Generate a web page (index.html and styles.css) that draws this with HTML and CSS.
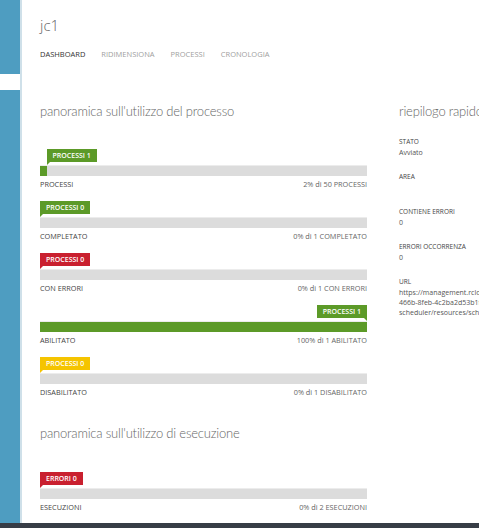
FILE: index.html
```html
<!DOCTYPE html>
<html lang="it">
<head>
<meta charset="utf-8">
<title>jc1 - dashboard</title>
<link rel="stylesheet" href="styles.css">
</head>
<body>
<div class="app">
  <aside class="sidebar">
    <div class="side-top"></div>
    <div class="side-strip"></div>
    <div class="side-rest"></div>
  </aside>
  <main class="main">
    <header class="head">
      <h1 class="title">jc1</h1>
      <nav class="tabs">
        <span class="tab tab--active">DASHBOARD</span>
        <span class="tab">RIDIMENSIONA</span>
        <span class="tab">PROCESSI</span>
        <span class="tab">CRONOLOGIA</span>
      </nav>
    </header>
    <div class="cols">
      <section class="col-main">
        <h2 class="section-title">panoramica sull'utilizzo del processo</h2>
        <div class="meters">
          <div class="meter">
            <div class="badge-row"><span class="badge badge--green" style="margin-left:2%">PROCESSI 1</span></div>
            <div class="track"><div class="fill fill--green" style="width:2%"></div></div>
            <div class="meter-foot"><span>PROCESSI</span><span>2% di 50 PROCESSI</span></div>
          </div>
          <div class="meter">
            <div class="badge-row"><span class="badge badge--green">PROCESSI 0</span></div>
            <div class="track"></div>
            <div class="meter-foot"><span>COMPLETATO</span><span>0% di 1 COMPLETATO</span></div>
          </div>
          <div class="meter">
            <div class="badge-row"><span class="badge badge--red">PROCESSI 0</span></div>
            <div class="track"></div>
            <div class="meter-foot"><span>CON ERRORI</span><span>0% di 1 CON ERRORI</span></div>
          </div>
          <div class="meter">
            <div class="badge-row badge-row--end"><span class="badge badge--green badge--end">PROCESSI 1</span></div>
            <div class="track"><div class="fill fill--green" style="width:100%"></div></div>
            <div class="meter-foot"><span>ABILITATO</span><span>100% di 1 ABILITATO</span></div>
          </div>
          <div class="meter">
            <div class="badge-row"><span class="badge badge--yellow">PROCESSI 0</span></div>
            <div class="track"></div>
            <div class="meter-foot"><span>DISABILITATO</span><span>0% di 1 DISABILITATO</span></div>
          </div>
        </div>
        <h2 class="section-title section-title--second">panoramica sull'utilizzo di esecuzione</h2>
        <div class="meters meters--second">
          <div class="meter">
            <div class="badge-row"><span class="badge badge--red">ERRORI 0</span></div>
            <div class="track"></div>
            <div class="meter-foot"><span>ESECUZIONI</span><span>0% di 2 ESECUZIONI</span></div>
          </div>
        </div>
      </section>
      <section class="col-side">
        <h2 class="section-title">riepilogo rapido</h2>
        <dl class="summary">
          <div class="sum-item"><dt>STATO</dt><dd>Avviato</dd></div>
          <div class="sum-item"><dt>AREA</dt><dd></dd></div>
          <div class="sum-item"><dt>CONTIENE ERRORI</dt><dd>0</dd></div>
          <div class="sum-item"><dt>ERRORI OCCORRENZA</dt><dd>0</dd></div>
          <div class="sum-item"><dt>URL</dt><dd class="url"><span>https://management.rcloudservices.net/7c1e2a90-</span><span>466b-8feb-4c2ba2d53b1f/cloudservices/</span><span>scheduler/resources/scheduler/jc1</span></dd></div>
        </dl>
      </section>
    </div>
  </main>
</div>
<div class="footer-bar"></div>
</body>
</html>
```

FILE: styles.css
```css
html, body {
  margin: 0;
  padding: 0;
  height: 528px;
  overflow: hidden;
  background: #fff;
  font-family: "Open Sans", "Noto Sans", sans-serif;
  color: #444;
}

.app {
  display: flex;
  height: 523px;
}

.sidebar {
  flex: 0 0 20px;
  display: flex;
  flex-direction: column;
  border-right: 2px solid #cfe0e9;
}
.side-top { height: 74px; background: #4e9dc1; }
.side-strip { height: 16px; background: #fff; }
.side-rest { flex: 1; background: #4e9dc1; }

.main {
  flex: 1;
  min-width: 0;
  padding: 15px 0 0 18px;
  overflow: hidden;
}

.title {
  margin: 0;
  font-size: 15px;
  line-height: 20px;
  font-weight: 300;
  color: #666;
}

.tabs {
  display: flex;
  gap: 16px;
  margin-top: 14px;
  font-size: 7.5px;
  line-height: 10px;
  color: #a0a0a0;
}
.tab--active { color: #333; }

.cols {
  display: flex;
  gap: 32px;
  margin-top: 43px;
}

.col-main { flex: 0 0 327px; }
.col-side { flex: 0 0 220px; }

.section-title {
  margin: 0;
  font-family: "Lato", "Open Sans", sans-serif;
  font-size: 13px;
  line-height: 18px;
  font-weight: 300;
  color: #666;
  letter-spacing: -0.2px;
}
.section-title--second { margin-top: 27px; }

.meters { margin-top: 29px; }
.meters--second { margin-top: 30px; }

.meter { margin-bottom: 12px; }

.badge-row {
  display: flex;
  height: 13px;
  margin-bottom: 3px;
}
.badge-row--end { justify-content: flex-end; }

.badge {
  position: relative;
  padding: 0 6px;
  height: 13px;
  line-height: 13px;
  font-size: 7px;
  font-weight: 600;
  color: #fff;
}
.badge::after {
  content: "";
  position: absolute;
  top: 100%;
  left: 0;
  border-left: 3px solid transparent;
  border-bottom: 3px solid transparent;
}
.badge--end::after {
  left: auto;
  right: 0;
  border-left: 0;
  border-right: 3px solid transparent;
}
.badge--green { background: #5c9a28; }
.badge--red { background: #c9202f; }
.badge--yellow { background: #f5c400; }
.badge--green::after { border-left-color: #5c9a28; border-right-color: #5c9a28; }
.badge--red::after { border-left-color: #c9202f; }
.badge--yellow::after { border-left-color: #f5c400; }

.track {
  height: 11px;
  background: #dcdcdc;
  border-top: 1px solid #ececec;
  box-sizing: border-box;
}
.fill { height: 100%; }
.fill--green { background: #5c9a28; }

.meter-foot {
  display: flex;
  justify-content: space-between;
  margin-top: 3px;
  font-size: 7.3px;
  line-height: 10px;
  color: #444;
}
.meter-foot span:last-child { color: #666; }

.summary {
  margin: 16px 0 0;
}
.sum-item { margin-bottom: 13px; }
.sum-item dt {
  font-size: 6.5px;
  line-height: 12px;
  color: #444;
  min-height: 12px;
}
.sum-item dd {
  margin: 0;
  font-size: 7px;
  line-height: 10px;
  min-height: 10px;
  color: #555;
}
.url {
  display: flex;
  flex-direction: column;
  white-space: nowrap;
}
.url span { line-height: 10px; }

.footer-bar {
  height: 5px;
  background: #373d46;
}
```
